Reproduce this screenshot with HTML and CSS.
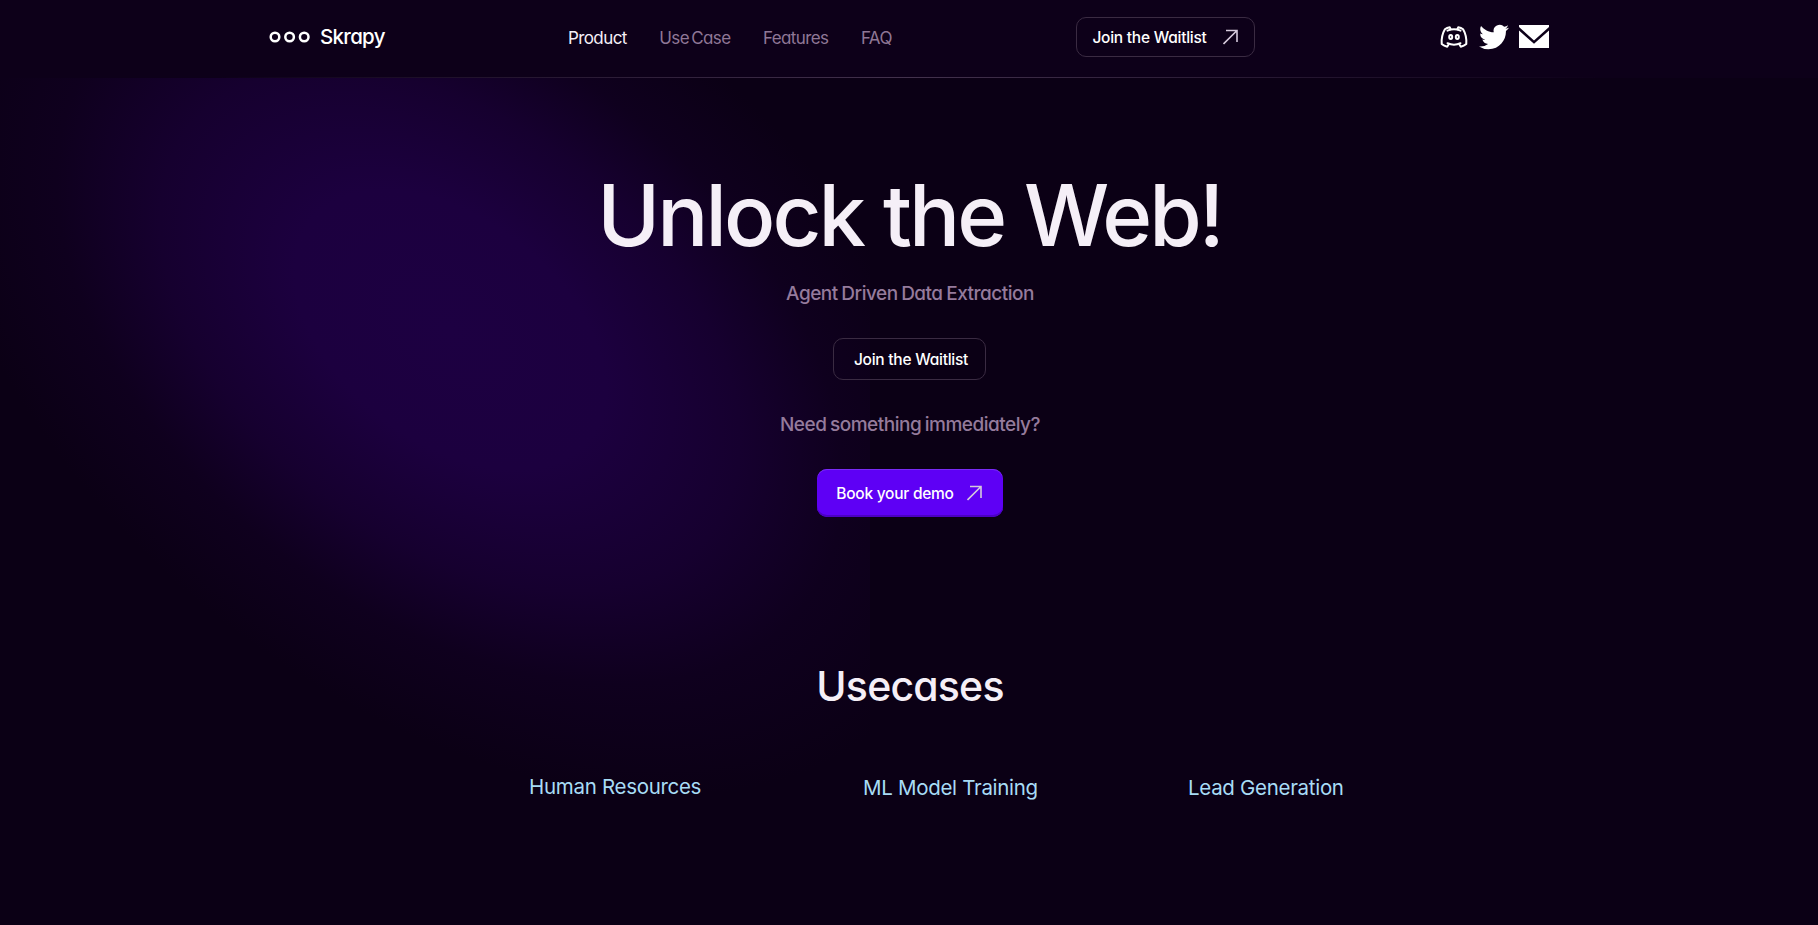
FILE: index.html
```
<!DOCTYPE html>
<html lang="en">
<head>
    <meta charset="UTF-8">
    <meta name="viewport" content="width=device-width, initial-scale=1.0">
    <title>Skrapy</title>
    <link rel="stylesheet" href="styles.css">
</head>
<body>
    <div class="glow"></div>

    <header class="header">
        <div class="header-inner">
            <a class="logo" href="#">
                <svg width="42" height="12" viewBox="0 0 42 12" fill="none" stroke="#fff" stroke-width="2.5">
                    <circle cx="6" cy="6" r="4.300"/>
                    <circle cx="20.600" cy="6" r="4.300"/>
                    <circle cx="35.200" cy="6" r="4.300"/>
                </svg>
                <span>Skrapy</span>
            </a>
            <nav class="nav">
                <a class="nav-link active" href="#">Product</a>
                <a class="nav-link" href="#usecases">Use Case</a>
                <a class="nav-link" href="#">Features</a>
                <a class="nav-link" href="#">FAQ</a>
            </nav>
            <a class="btn btn-outline btn-nav" href="#">
                <span>Join the Waitlist</span>
                <svg class="arrow" width="16" height="16" viewBox="0 0 16 16"><path d="M3 1.500h11V13M14 1.500L.5 15"/></svg>
            </a>
            <div class="socials">
                <a href="#"><svg width="30" height="30" viewBox="0 0 30 30" fill="none" stroke="#fff" stroke-width="2" stroke-linecap="round" stroke-linejoin="round">
                    <path d="M8.500 8.600C12.500 7 17.500 7 21.500 8.600M8.500 21.200C12.500 23 17.500 23 21.500 21.200"/>
                    <path d="M18.300 7.400l.9-2.100c1.900.3 3.600 1 4.900 2 2.300 3.900 3.600 8.600 3.200 14.600-1.600 1.400-3.400 2.300-5.500 2.800l-1.700-2.700M11.700 7.400l-.9-2.100c-1.900.3-3.600 1-4.900 2C3.600 11.200 2.300 15.900 2.700 21.900c1.600 1.400 3.400 2.300 5.500 2.800l1.700-2.700"/>
                    <ellipse cx="11.700" cy="15" rx="1.500" ry="1.900"/>
                    <ellipse cx="18.300" cy="15" rx="1.500" ry="1.900"/>
                </svg></a>
                <a href="#"><svg width="30" height="30" viewBox="0 0 24 24" fill="#fff"><path d="M23.953 4.570a10 10 0 01-2.825.775 4.958 4.958 0 002.163-2.723c-.951.555-2.005.959-3.127 1.184a4.920 4.920 0 00-8.384 4.482C7.690 8.095 4.067 6.130 1.640 3.162a4.822 4.822 0 00-.666 2.475c0 1.710.870 3.213 2.188 4.096a4.904 4.904 0 01-2.228-.616v.060a4.923 4.923 0 003.946 4.827 4.996 4.996 0 01-2.212.085 4.936 4.936 0 004.604 3.417 9.867 9.867 0 01-6.102 2.105c-.390 0-.779-.023-1.170-.067a13.995 13.995 0 007.557 2.209c9.053 0 13.998-7.496 13.998-13.985 0-.210 0-.420-.015-.630A9.935 9.935 0 0024 4.590z"/></svg></a>
                <a href="#"><svg width="30" height="30" viewBox="0 0 30 30" fill="#fff"><path d="M0 3h30v2L15 18.500 0 5zM0 8.500l15 13.200L30 8.500V26H0z"/></svg></a>
            </div>
        </div>
        <div class="header-line"></div>
    </header>

    <main>
        <section class="hero">
            <h1>Unlock the Web!</h1>
            <p class="hero-text">Agent Driven Data Extraction</p>
            <a class="btn btn-outline btn-waitlist" href="#">Join the Waitlist</a>
            <p class="hero-text hero-question">Need something immediately?</p>
            <a class="btn btn-primary" href="#">
                <span>Book your demo</span>
                <svg class="arrow" width="16" height="16" viewBox="0 0 16 16"><path d="M3 1.500h11V13M14 1.500L.5 15"/></svg>
            </a>
        </section>

        <section class="usecases" id="usecases">
            <h2>Usecases</h2>
            <div class="usecase-list">
                <h3>Human Resources</h3>
                <h3>ML Model Training</h3>
                <h3>Lead Generation</h3>
            </div>
        </section>
    </main>
</body>
</html>
```
FILE: styles.css
```
* {
    box-sizing: border-box;
}

body {
    margin: 0;
    min-height: 100vh;
    background-color: #0b0015;
    color: #f5eff7;
    font-family: 'Inter', 'Liberation Sans', sans-serif;
    font-feature-settings: 'cv11';
    overflow: hidden;
}

a {
    color: inherit;
    text-decoration: none;
}

svg {
    display: block;
}

h1,
h2,
h3,
p {
    margin: 0;
}

/* purple light behind the hero, cut off at its right edge */
.glow {
    position: absolute;
    top: 0;
    left: 0;
    width: 870px;
    height: 925px;
    overflow: hidden;
    z-index: -1;
}

.glow::before {
    content: '';
    position: absolute;
    left: -140px;
    top: -40px;
    width: 1180px;
    height: 740px;
    background: radial-gradient(closest-side, #1d0042 0%, #1c003f 30%, #16002f 56%, #0f001e 76%, rgba(11, 0, 21, 0) 100%);
    transform: rotate(38deg);
}

/* header */
.header {
    height: 78px;
    background-color: #0d0019;
    display: flex;
    flex-direction: column;
}

.header-inner {
    flex: 1;
    width: 1280px;
    margin: 0 auto;
    padding-bottom: 3px;
    display: flex;
    align-items: center;
}

.header-line {
    height: 1px;
    background: linear-gradient(90deg, rgba(74, 56, 84, 0) 12%, #43324d 50%, rgba(74, 56, 84, 0) 88%);
}

.logo {
    display: flex;
    align-items: center;
    gap: 9px;
    width: 299px;
    color: #fff;
    font-size: 20.5px;
    font-weight: 500;
    line-height: 24px;
    letter-spacing: -0.7px;
}

.logo span {
    margin-top: -1px;
}

.nav {
    display: flex;
    gap: 32.5px;
    width: 508px;
    padding-top: 1px;
    font-size: 17px;
    letter-spacing: -0.6px;
    word-spacing: -2px;
}

.nav-link {
    color: #8f7796;
}

.nav-link.active {
    color: #f5eff7;
}

.btn {
    display: flex;
    align-items: center;
    justify-content: center;
    border-radius: 10px;
    color: #fff;
    font-size: 15.5px;
    font-weight: 550;
    letter-spacing: -0.25px;
}

.btn-outline {
    border: 1px solid #3a2b42;
}

.btn-nav {
    width: 179px;
    height: 40px;
    gap: 16px;
}

.arrow {
    fill: none;
    stroke: #d5c9dc;
    stroke-width: 1.6;
}

.socials {
    margin-left: auto;
    display: flex;
    gap: 10px;
}

/* hero */
.hero {
    display: flex;
    flex-direction: column;
    align-items: center;
    padding-top: 86px;
    padding-left: 1px;
}

.hero h1 {
    font-size: 85px;
    font-weight: 550;
    line-height: 104px;
    letter-spacing: -2.9px;
}

.hero-text {
    margin-top: 12px;
    padding-left: 1px;
    color: #957b9c;
    font-size: 19px;
    font-weight: 500;
    line-height: 28px;
    letter-spacing: -0.5px;
    word-spacing: -1px;
}

.btn-waitlist {
    width: 153px;
    height: 42px;
    margin-top: 30px;
    padding-left: 3px;
}

.hero-question {
    margin-top: 31px;
}

.btn-primary {
    width: 186px;
    height: 48px;
    margin-top: 30px;
    gap: 13px;
    background-color: #5e00f5;
    box-shadow: inset 0 1px 0 #7a2bf5, inset 0 -2px 0 #4c00c4;
}

/* usecases */
.usecases {
    padding-top: 145px;
}

.usecases h2 {
    padding-left: 2px;
    font-size: 41px;
    font-weight: 500;
    line-height: 48px;
    letter-spacing: -0.8px;
    text-align: center;
}

.usecase-list {
    display: grid;
    grid-template-columns: 334px 325px auto;
    margin-top: 64px;
    padding-left: 529px;
}

.usecase-list h3 {
    color: #a8dcf5;
    font-size: 20.5px;
    font-weight: 400;
    font-feature-settings: normal;
    line-height: 28px;
    letter-spacing: -0.3px;
}

.usecase-list h3:first-child {
    margin-top: -1px;
}
```
